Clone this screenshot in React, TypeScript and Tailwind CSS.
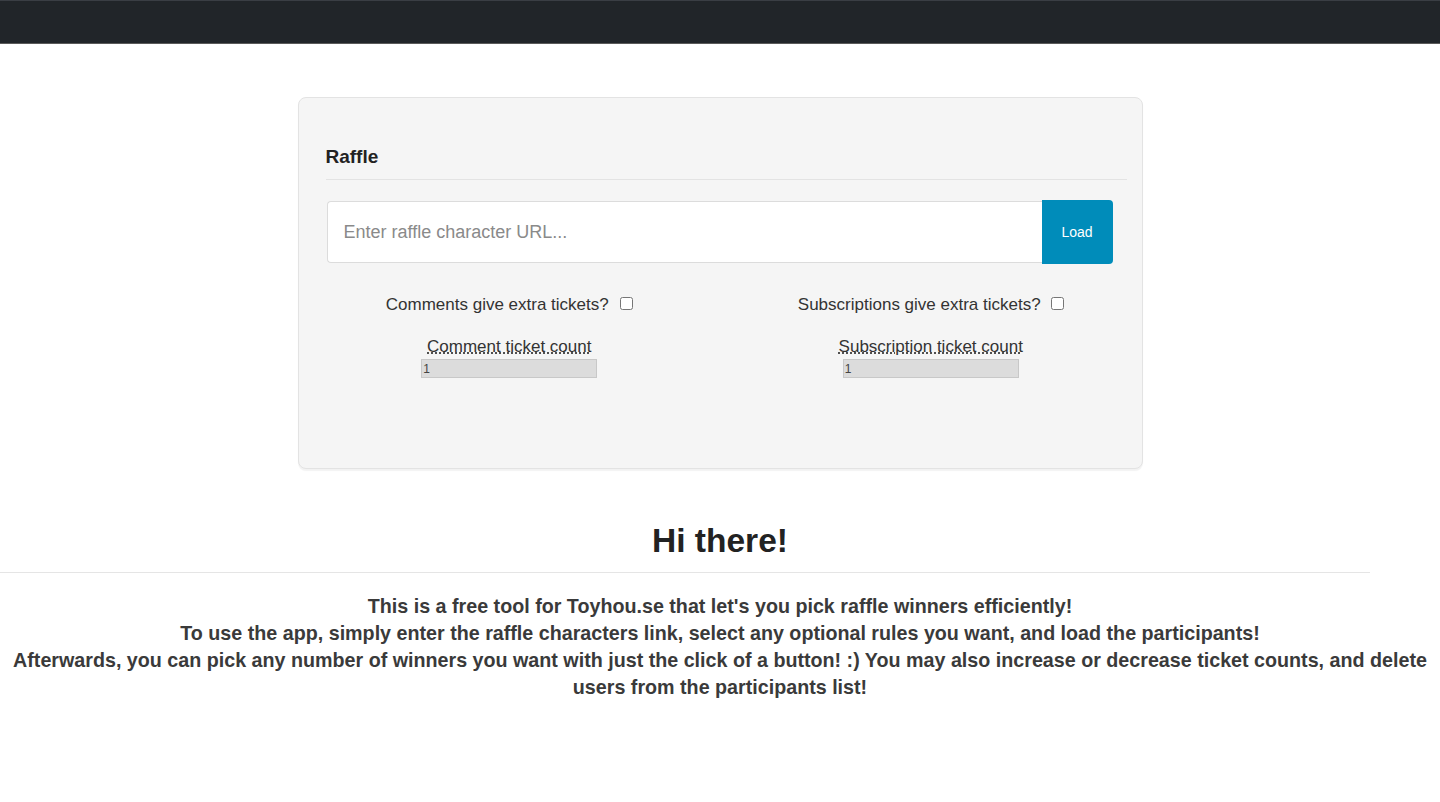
const App = () => {
  return (
    <div className="min-h-[802px] bg-white font-['Liberation_Sans',Arial,sans-serif] text-[#333]">
      {/* Top navbar */}
      <div className="h-[44px] bg-[#212529] border-t border-t-[#3a3e44] border-b border-b-[#5a5a5a]" />

      {/* Raffle card */}
      <div className="mt-[53px] mx-auto w-[845px] h-[372px] bg-[#f5f5f5] border border-[#e3e3e3] rounded-lg shadow-[0_2px_1px_rgba(0,0,0,0.05)]">
        <div className="pl-[27px] pr-[15px] pt-[49px]">
          <h3 className="text-[19px] leading-[20px] font-bold text-[#222]">Raffle</h3>
          <hr className="mt-[12px] border-0 border-t border-[#e3e3e3]" />
        </div>

        <div className="mt-[21px] ml-[28px] w-[786px] flex">
          <input
            type="text"
            placeholder="Enter raffle character URL..."
            className="flex-1 h-[62px] px-[16px] bg-white border border-[#dcdcdc] border-r-0 rounded-l-[4px] text-[18px] placeholder:text-[#8a8a8a] outline-none"
          />
          <button className="w-[71px] h-[64px] -mt-px bg-[#008cba] text-white text-[14px] rounded-r-[4px]">
            Load
          </button>
        </div>

        <div className="mt-[32px] grid grid-cols-2">
          <div className="flex flex-col items-center">
            <label className="flex items-center text-[17px] leading-[18px] text-[#333]">
              Comments give extra tickets?
              <input type="checkbox" className="ml-[11px] w-[13px] h-[13px] -mt-[3px]" />
            </label>
            <abbr
              title="Comment ticket count"
              className="mt-[24px] text-[17px] leading-[18px] underline decoration-dotted"
            >
              Comment ticket count
            </abbr>
            <input
              type="number"
              disabled
              defaultValue={1}
              className="mt-[3px] w-[176px] h-[19px] px-[1px] bg-[#dcdcdc] border border-[#c8c8c8] text-[12px] text-[#444]"
            />
          </div>
          <div className="flex flex-col items-center">
            <label className="flex items-center text-[17px] leading-[18px] text-[#333]">
              Subscriptions give extra tickets?
              <input type="checkbox" className="ml-[10px] w-[13px] h-[13px] -mt-[3px]" />
            </label>
            <abbr
              title="Subscription ticket count"
              className="mt-[24px] text-[17px] leading-[18px] underline decoration-dotted"
            >
              Subscription ticket count
            </abbr>
            <input
              type="number"
              disabled
              defaultValue={1}
              className="mt-[3px] w-[176px] h-[19px] px-[1px] bg-[#dcdcdc] border border-[#c8c8c8] text-[12px] text-[#444]"
            />
          </div>
        </div>
      </div>

      {/* Intro */}
      <div className="mt-[53px]">
        <h1 className="text-center text-[33.5px] leading-[38px] font-bold text-[#222]">Hi there!</h1>
        <hr className="mt-[12px] w-[1370px] border-0 border-t border-[#e5e5e5]" />
        <p className="mt-[20px] px-[6px] text-center text-[19.7px] leading-[27px] font-bold text-[#3a3a3a]">
          This is a free tool for Toyhou.se that let's you pick raffle winners efficiently!
          <br />
          To use the app, simply enter the raffle characters link, select any optional rules you want, and load the participants!
          <br />
          Afterwards, you can pick any number of winners you want with just the click of a button! :) You may also increase or decrease ticket counts, and delete users from the participants list!
        </p>
      </div>
    </div>
  )
}

export default App
